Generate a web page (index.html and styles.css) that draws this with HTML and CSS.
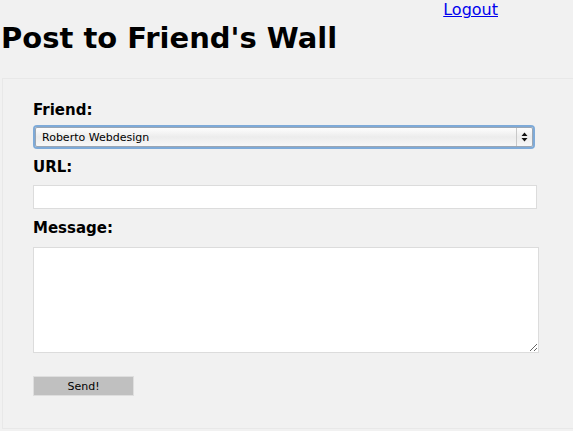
FILE: index.html
```html
<!DOCTYPE html>
<html>
<head>
<meta charset="utf-8">
<link rel="stylesheet" href="styles.css">
</head>
<body>
<div class="topbar"><a href="#" class="logout">Logout</a></div>
<h1 class="title">Post to Friend's Wall</h1>
<form class="panel">
  <label class="label">Friend:</label>
  <div class="select">
    <span class="select-text">Roberto Webdesign</span>
    <span class="select-arrow">
      <svg width="7" height="10" viewBox="0 0 7 10"><path d="M3.5 0.5 L6.5 4 H0.5 Z M0.5 6 H6.5 L3.5 9.5 Z" fill="#111"/></svg>
    </span>
  </div>
  <label class="label">URL:</label>
  <input class="input" type="text">
  <label class="label">Message:</label>
  <textarea class="textarea"></textarea>
  <button class="button" type="button">Send!</button>
</form>
</body>
</html>
```
FILE: styles.css
```css
html, body {
  margin: 0;
  padding: 0;
  background: #f1f1f1;
  font-family: "DejaVu Sans", "Lucida Grande", sans-serif;
  overflow: hidden;
}
.topbar {
  width: 498px;
  text-align: right;
  height: 19px;
}
.logout {
  color: #0000ee;
  font-size: 16px;
  line-height: 19px;
  text-decoration: underline;
}
.title {
  margin: 0 0 0 1px;
  font-size: 29px;
  font-weight: bold;
  line-height: 38px;
  color: #000;
}
.panel {
  margin: 21px 0 0 2px;
  border: 1px solid #e8e8e8;
  border-right: none;
  padding: 20px 0 29px 30px;
  display: flex;
  flex-direction: column;
  align-items: flex-start;
  height: 300px;
}
.label {
  font-size: 15px;
  font-weight: bold;
  line-height: 22px;
  color: #000;
}
.select {
  margin: 6px 0 9px 2px;
  width: 496px;
  height: 18px;
  border: 1px solid #9aa6b4;
  box-shadow: 0 0 0 2px #7eaad8;
  border-radius: 2px;
  background: linear-gradient(#fdfdfd, #ececec 50%, #f7f7f7);
  display: flex;
  align-items: center;
}
.select-text {
  flex: 1;
  font-size: 11px;
  padding-left: 6px;
  color: #000;
}
.select-arrow {
  width: 15px;
  height: 18px;
  border-left: 1px solid #c8c8c8;
  display: flex;
  align-items: center;
  justify-content: center;
}
.input {
  margin: 7px 0 8px 0;
  width: 504px;
  height: 24px;
  box-sizing: border-box;
  border: 1px solid #dcdcdc;
  background: #fff;
  padding: 0;
}
.textarea {
  margin: 8px 0 0 0;
  width: 506px;
  height: 106px;
  box-sizing: border-box;
  border: 1px solid #dcdcdc;
  background: #fff;
  resize: both;
  padding: 0;
}
.button {
  margin-top: 23px;
  width: 101px;
  height: 20px;
  box-sizing: border-box;
  background: #c0c0c0;
  border: 1px solid #dedede;
  font-family: "DejaVu Sans", sans-serif;
  font-size: 11px;
  color: #000;
  padding: 0;
}
```
